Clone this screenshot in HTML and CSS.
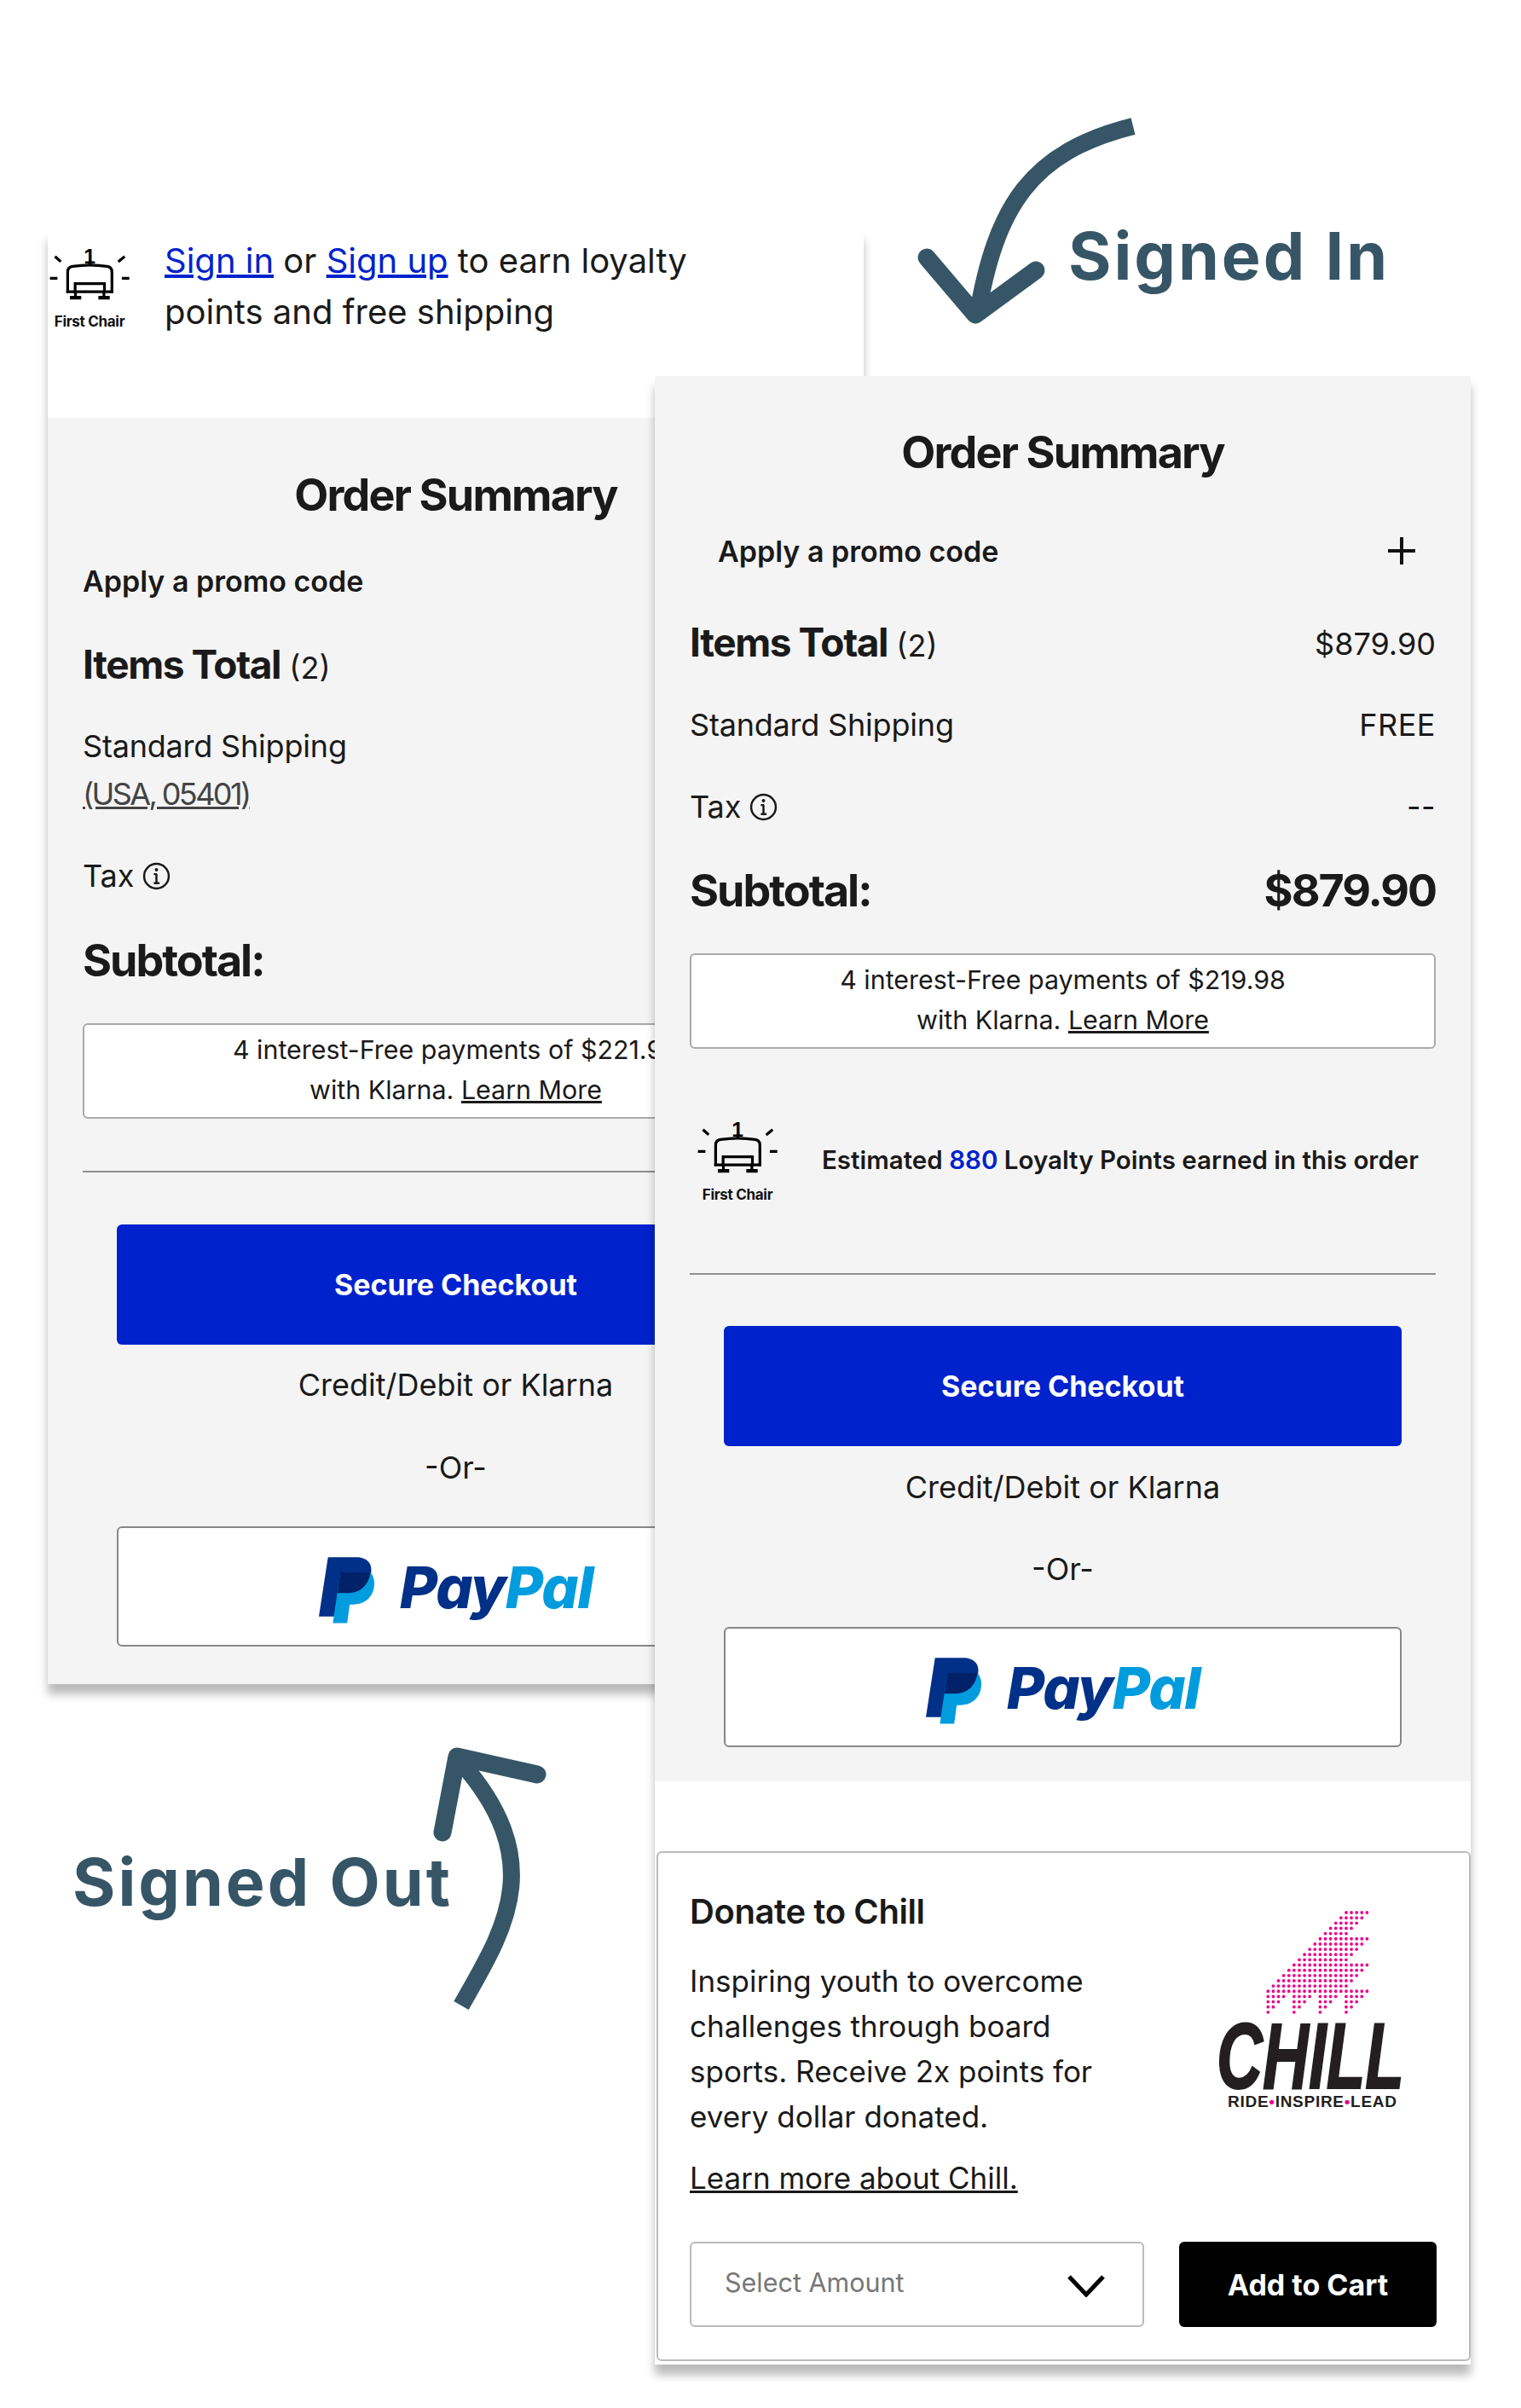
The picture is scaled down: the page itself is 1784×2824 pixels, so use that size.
FILE: index.html
```html
<!DOCTYPE html>
<html lang="en">
<head>
    <meta charset="UTF-8">
    <title>Order Summary - Signed In vs Signed Out</title>
    <link rel="stylesheet" href="styles.css">
</head>
<body>
    <svg width="0" height="0" class="defs">
        <symbol id="pp-mark" viewBox="165 172 200 232">
            <path fill="#003087" d="M197 172H295C335 172 355 195 347 232C336 278 305 298 262 298H233L220 380H165Z"/>
            <path fill="#009cde" d="M240 225H345C372 250 365 338 283 338H273L264 403H214Z"/>
            <path fill="#012169" d="M240 225H346C338 275 305 298 262 298H230Z"/>
        </symbol>
        <symbol id="info" viewBox="0 0 32 32">
            <circle cx="16" cy="16" r="14" fill="none" stroke="#1a1a1a" stroke-width="2.4"/>
            <path d="M16 13.5V24M13 13.7H16.5M13 24H19.5" fill="none" stroke="#1a1a1a" stroke-width="2.4"/>
            <circle cx="16" cy="8.8" r="1.9" fill="#1a1a1a"/>
        </symbol>
    </svg>

    <div class="stage">
        <!-- signed out screen, sits under the other one -->
        <section class="screen screen-out">
            <div class="signin">
                <div class="chair">
                    <svg class="chair-icon" viewBox="110 100 296 197">
                        <text x="258" y="161" text-anchor="middle" class="chair-one">1</text>
                        <g class="chair-lines">
                            <path d="M260 150V168"/>
                            <path d="M179 268V192Q179 174 197 172Q260 162 321 172Q339 174 339 192V268"/>
                            <path d="M174 264H344"/>
                            <path d="M206 264V234H312V264"/>
                            <path d="M207 262V284M310 262V284"/>
                            <path d="M187 285H228M290 285H331" stroke-width="13"/>
                            <path d="M115 215H142M375 215H402M133 136L154 155M385 136L362 155"/>
                        </g>
                    </svg>
                    <span>First Chair</span>
                </div>
                <p><a href="#">Sign in</a> or <a href="#">Sign up</a> to earn loyalty<br>points and free shipping</p>
            </div>
            <div class="summary">
                <h2>Order Summary</h2>
                <div class="promo">Apply a promo code</div>
                <div class="row items"><span><b>Items Total</b> (2)</span></div>
                <div class="row shipping"><span>Standard Shipping</span></div>
                <div class="row address"><span class="addr">(USA, 05401)</span></div>
                <div class="row tax"><span>Tax</span><svg class="info"><use href="#info"/></svg></div>
                <div class="row subtotal"><span>Subtotal:</span></div>
                <div class="klarna">4 interest-Free payments of $221.98<br>with Klarna. <a href="#">Learn More</a></div>
                <hr>
                <button class="checkout">Secure Checkout</button>
                <div class="note">Credit/Debit or Klarna</div>
                <div class="note or">-Or-</div>
                <button class="paypal">
                    <svg class="pp-mark"><use href="#pp-mark"/></svg>
                    <span class="pp-word"><i>Pay</i><em>Pal</em></span>
                </button>
            </div>
        </section>

        <!-- signed in screen -->
        <section class="screen screen-in">
            <div class="summary">
                <h2>Order Summary</h2>
                <div class="promo"><span>Apply a promo code</span><span class="plus"></span></div>
                <div class="row items"><span><b>Items Total</b> (2)</span><span>$879.90</span></div>
                <div class="row shipping"><span>Standard Shipping</span><span class="push">FREE</span></div>
                <div class="row tax"><span>Tax</span><svg class="info"><use href="#info"/></svg><span class="push">--</span></div>
                <div class="row subtotal"><span>Subtotal:</span><span>$879.90</span></div>
                <div class="klarna">4 interest-Free payments of $219.98<br>with Klarna. <a href="#">Learn More</a></div>
                <div class="loyalty">
                    <div class="chair">
                        <svg class="chair-icon" viewBox="110 100 296 197">
                            <text x="258" y="161" text-anchor="middle" class="chair-one">1</text>
                            <g class="chair-lines">
                                <path d="M260 150V168"/>
                                <path d="M179 268V192Q179 174 197 172Q260 162 321 172Q339 174 339 192V268"/>
                                <path d="M174 264H344"/>
                                <path d="M206 264V234H312V264"/>
                                <path d="M207 262V284M310 262V284"/>
                                <path d="M187 285H228M290 285H331" stroke-width="13"/>
                                <path d="M115 215H142M375 215H402M133 136L154 155M385 136L362 155"/>
                            </g>
                        </svg>
                        <span>First Chair</span>
                    </div>
                    <p>Estimated <strong>880</strong> Loyalty Points earned in this order</p>
                </div>
                <hr>
                <button class="checkout">Secure Checkout</button>
                <div class="note">Credit/Debit or Klarna</div>
                <div class="note or">-Or-</div>
                <button class="paypal">
                    <svg class="pp-mark"><use href="#pp-mark"/></svg>
                    <span class="pp-word"><i>Pay</i><em>Pal</em></span>
                </button>
            </div>

            <div class="donate">
                <div class="donate-top">
                    <div class="donate-copy">
                        <h3>Donate to Chill</h3>
                        <p>Inspiring youth to overcome challenges through board sports. Receive 2x points for every dollar donated.</p>
                        <a href="#">Learn more about Chill.</a>
                    </div>
                    <svg class="chill-logo" viewBox="0 0 224 238">
                        <g class="dot-field" transform="translate(60.3 3) scale(6.11 6.15)">
                            <path d="M15 0H19.1M14 1H18.1M13 2H17.1M12 3H16.1M11 4H15.1M10 5H19.1M9 6H18.1M8 7H17.1M7 8H16.1M6 9H15.1M5 10H19.1M4 11H18.1M3 12H17.1M2 13H16.1M1 14H15.1M0 15H19.1M0 16H3.1M5 16H8.1M10 16H13.1M15 16H18.1M0 17H2.1M5 17H7.1M10 17H12.1M15 17H17.1M0 18H1.1M5 18H6.1M10 18H11.1M15 18H16.1M0 19H.1M5 19H5.1M10 19H10.1M15 19H15.1"/>
                        </g>
                        <text x="0" y="209" textLength="220" lengthAdjust="spacingAndGlyphs" class="chill-word">CHILL</text>
                        <text x="13" y="231" textLength="198" class="chill-tag">RIDE<tspan>•</tspan>INSPIRE<tspan>•</tspan>LEAD</text>
                    </svg>
                </div>
                <div class="donate-actions">
                    <div class="amount">
                        <span>Select Amount</span>
                        <svg class="chevron" viewBox="0 0 44 26"><path d="M2 2L22 23L42 2"/></svg>
                    </div>
                    <button class="add-cart">Add to Cart</button>
                </div>
            </div>
        </section>

        <!-- annotations -->
        <svg class="arrows" viewBox="0 0 1784 2824">
            <path d="M1329 148C1210 178 1168 240 1146 372"/>
            <path class="head" d="M1087 302L1144 369L1215 317"/>
            <path d="M541 2352C590 2265 645 2185 540 2066"/>
            <path class="head" d="M519 2149L536 2060L630 2081"/>
        </svg>
        <div class="label label-in">Signed In</div>
        <div class="label label-out">Signed Out</div>
    </div>
</body>
</html>
```

FILE: styles.css
```css
* {
    box-sizing: border-box;
}

body {
    margin: 0;
    background-color: #fff;
    font-family: Inter, "Liberation Sans", sans-serif;
    color: #1a1a1a;
}

.defs {
    position: absolute;
}

.stage {
    position: relative;
    width: 1784px;
    height: 2824px;
    overflow: hidden;
}

.screen {
    position: absolute;
    width: 957px;
    background-color: #fff;
    box-shadow: 0 12px 10px rgba(0, 0, 0, 0.27);
}

.screen-out {
    left: 56px;
    top: 270px;
}

.screen-in {
    left: 768px;
    top: 441px;
    padding-bottom: 4px;
}

/* sign in strip */
.signin {
    display: flex;
    height: 220px;
    gap: 40px;
    padding: 19px 150px 0 1px;
    font-size: 40px;
    line-height: 60px;
}

.signin p {
    margin: -13px 0 0;
    white-space: nowrap;
}

.signin a {
    color: #0022cc;
}

.chair {
    display: flex;
    flex-direction: column;
    align-items: center;
    width: 96px;
    flex-shrink: 0;
    font-size: 17px;
    line-height: 20px;
    font-weight: 700;
    letter-spacing: -0.3px;
    color: #111;
}

.chair-icon {
    width: 96px;
    height: 64px;
    margin-bottom: 14px;
    overflow: visible;
}

.chair-lines {
    fill: none;
    stroke: #000;
    stroke-width: 10;
}

.chair-one {
    font-family: "Liberation Sans", sans-serif;
    font-size: 76px;
    font-weight: 700;
}

/* summary block, shared by both screens */
.summary {
    background-color: #f4f4f4;
    padding: 60px 41px 40px;
    font-size: 36px;
    line-height: 50px;
}

h2 {
    margin: 0;
    font-size: 52px;
    line-height: 60px;
    font-weight: 700;
    letter-spacing: -1.8px;
    text-align: center;
}

.promo {
    display: flex;
    justify-content: space-between;
    align-items: center;
    height: 40px;
    margin: 66px 24px 0 33px;
    font-size: 34px;
    font-weight: 600;
}

.plus {
    width: 32px;
    height: 32px;
    margin-top: -3px;
    background:
        linear-gradient(#111, #111) center / 100% 4px no-repeat,
        linear-gradient(#111, #111) center / 4px 100% no-repeat;
}

.row {
    display: flex;
    justify-content: space-between;
    align-items: center;
}

.items {
    height: 60px;
    margin-top: 58px;
}

.items b {
    font-size: 46px;
    font-weight: 700;
    letter-spacing: -1.4px;
}

.shipping {
    margin-top: 40px;
    letter-spacing: -0.2px;
}

.tax {
    justify-content: flex-start;
    margin-top: 46px;
}

.push {
    margin-left: auto;
    letter-spacing: 0.5px;
}

.info {
    width: 33px;
    height: 33px;
    margin-left: 10px;
}

.subtotal {
    height: 60px;
    margin-top: 44px;
    font-size: 52px;
    font-weight: 700;
    letter-spacing: -2px;
}

.klarna {
    height: 112px;
    margin-top: 43px;
    padding-top: 6px;
    background-color: #fff;
    border: 2px solid #aaa;
    border-radius: 6px;
    font-size: 30.4px;
    line-height: 47px;
    text-align: center;
    white-space: nowrap;
    overflow: hidden;
}

.klarna a {
    color: #1a1a1a;
}

.loyalty {
    display: flex;
    align-items: center;
    gap: 51px;
    height: 263px;
    padding: 0 8px;
    font-size: 29.5px;
    font-weight: 600;
}

.loyalty p {
    margin: -4px 0 0;
    white-space: nowrap;
}

.loyalty strong {
    font-weight: 600;
    color: #0022cc;
}

hr {
    height: 2px;
    margin: 0;
    border: 0;
    background-color: #8f8f8f;
}

.checkout,
.paypal {
    display: flex;
    align-items: center;
    justify-content: center;
    width: 795px;
    height: 141px;
    margin: 60px 0 0 40px;
    border-radius: 6px;
    font-family: inherit;
}

.checkout {
    border: 0;
    background-color: #0022cc;
    color: #fff;
    font-size: 34px;
    font-weight: 700;
}

.note {
    margin-top: 23px;
    text-align: center;
}

.or {
    margin-top: 46px;
}

.paypal {
    gap: 28px;
    margin-top: 43px;
    background-color: #fff;
    border: 2px solid #888;
}

.pp-mark {
    width: 67px;
    height: 78px;
    margin-top: 8px;
}

.pp-word {
    font-size: 68px;
    line-height: 70px;
    font-weight: 800;
    font-style: italic;
    letter-spacing: -1.3px;
}

.pp-word i {
    color: #003087;
}

.pp-word em {
    color: #009cde;
}

/* signed out screen differs in a few offsets */
.screen-out .summary {
    padding: 61px 41px 44px 41px;
}

.screen-out .promo {
    margin: 51px 0 0;
}

.screen-out .items {
    margin-top: 49px;
}

.screen-out .shipping {
    margin-top: 39px;
}

.screen-out .address {
    margin-top: 6px;
}

.addr {
    color: #444;
    text-decoration: underline;
    letter-spacing: -2.6px;
}

.screen-out .subtotal {
    margin-top: 45px;
}

.screen-out .klarna {
    margin-top: 43px;
}

.screen-out hr {
    margin-top: 61px;
}

.screen-out .checkout {
    margin-top: 61px;
}

.screen-out .note {
    margin-top: 22px;
}

.screen-out .or {
    margin-top: 47px;
}

.screen-out .paypal {
    margin-top: 44px;
}

/* donate card */
.donate {
    margin: 82px 0 0 2px;
    height: 598px;
    padding: 44px 38px 0 37px;
    border: 2px solid #bbb;
    border-radius: 6px;
    font-size: 35px;
}

.donate-top {
    display: flex;
    justify-content: space-between;
    height: 412px;
}

.donate-copy {
    width: 500px;
}

.donate h3 {
    margin: 0;
    font-size: 40px;
    line-height: 50px;
    font-weight: 600;
    letter-spacing: -0.4px;
}

.donate p {
    margin: 30px 0 0;
    line-height: 53px;
}

.donate a {
    display: block;
    margin-top: 20px;
    line-height: 50px;
    color: #1a1a1a;
}

.chill-logo {
    width: 224px;
    height: 238px;
    margin: 23px 34px 0 0;
    overflow: visible;
}

.dot-field path {
    fill: none;
    stroke: #ec008c;
    stroke-width: 0.62;
    stroke-linecap: round;
    stroke-dasharray: 0 1;
}

.chill-word {
    font-family: "Liberation Sans", sans-serif;
    font-size: 109px;
    font-weight: 700;
    font-style: italic;
    fill: #231f20;
    stroke: #231f20;
    stroke-width: 2;
}

.chill-tag {
    font-family: "Liberation Sans", sans-serif;
    font-size: 19px;
    font-weight: 700;
    fill: #231f20;
}

.chill-tag tspan {
    fill: #ec008c;
}

.donate-actions {
    display: flex;
    justify-content: space-between;
}

.amount {
    display: flex;
    align-items: center;
    justify-content: space-between;
    width: 533px;
    height: 100px;
    padding: 0 44px 6px 39px;
    border: 2px solid #bbb;
    border-radius: 6px;
    font-size: 30.5px;
    color: #777;
}

.chevron {
    width: 44px;
    height: 26px;
    margin-top: 10px;
}

.chevron path {
    fill: none;
    stroke: #000;
    stroke-width: 5;
}

.add-cart {
    width: 302px;
    height: 100px;
    border: 0;
    border-radius: 6px;
    background-color: #000;
    color: #fff;
    font-family: inherit;
    font-size: 34px;
    font-weight: 700;
}

/* annotations on top of the canvas */
.arrows {
    position: absolute;
    left: 0;
    top: 0;
    width: 1784px;
    height: 2824px;
    pointer-events: none;
}

.arrows path {
    fill: none;
    stroke: #365667;
    stroke-width: 20;
}

.arrows .head {
    stroke-width: 21;
    stroke-linecap: round;
    stroke-linejoin: round;
}

.label {
    position: absolute;
    font-size: 77px;
    line-height: 90px;
    font-weight: 700;
    letter-spacing: 3px;
    color: #365667;
    white-space: nowrap;
}

.label-in {
    left: 1253px;
    top: 255px;
}

.label-out {
    left: 85px;
    top: 2162px;
}
```
